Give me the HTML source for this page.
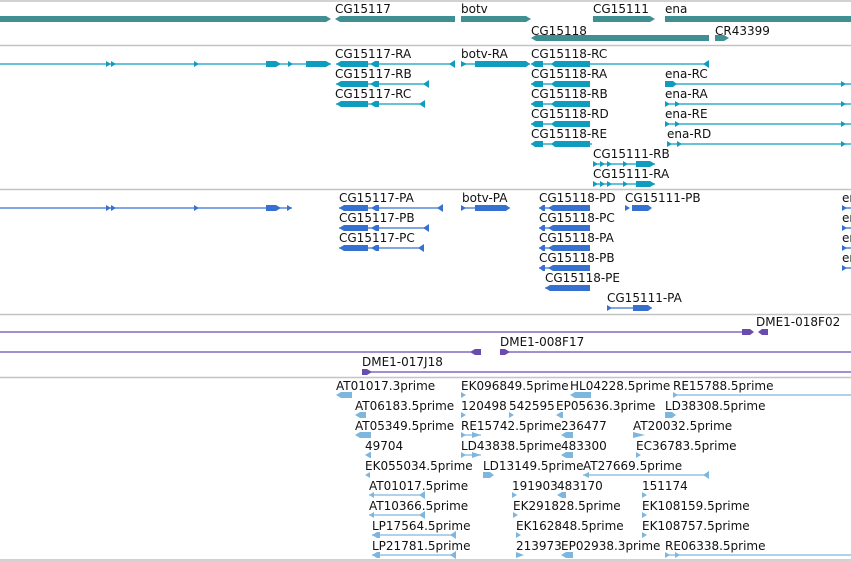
<!DOCTYPE html>
<html><head><meta charset="utf-8"><style>
html,body{margin:0;padding:0;background:#fff;width:851px;height:561px;overflow:hidden}
svg text{font-family:"DejaVu Sans","Liberation Sans",sans-serif;font-size:12px;fill:#111}
</style></head><body>
<svg width="851" height="561" xmlns="http://www.w3.org/2000/svg">
<g stroke="#c4c4c4" stroke-width="1.5">
<line x1="0" y1="1" x2="851" y2="1"/><line x1="0" y1="45.5" x2="851" y2="45.5"/>
<line x1="0" y1="189.5" x2="851" y2="189.5"/><line x1="0" y1="314.5" x2="851" y2="314.5"/>
<line x1="0" y1="377.5" x2="851" y2="377.5"/><line x1="0" y1="560" x2="851" y2="560"/>
</g>
<!-- genes -->
<g fill="#3f8f93">
<polygon points="0,16 326,16 331,19 326,22 0,22"/>
<polygon points="340,16 455,16 455,22 340,22 335,19"/>
<polygon points="461,16 526,16 531,19 526,22 461,22"/>
<polygon points="593,16 650,16 655,19 650,22 593,22"/>
<rect x="665" y="16" width="186" height="6"/>
<polygon points="536,35 709,35 709,41 536,41 531,38"/>
<polygon points="715,35 724,35 729,38 724,41 715,41"/>
</g>
<text x="335" y="13">CG15117</text><text x="461" y="13">botv</text><text x="593" y="13">CG15111</text><text x="665" y="13">ena</text>
<text x="531" y="35">CG15118</text><text x="715" y="35">CR43399</text>
<!-- transcripts -->
<g fill="#0e9dbf" stroke="#0e9dbf">
<g stroke-width="1.3">
<line x1="0" y1="64" x2="331" y2="64"/><line x1="336" y1="64" x2="455" y2="64"/><line x1="461" y1="64" x2="530" y2="64"/><line x1="531" y1="64" x2="709" y2="64"/>
<line x1="336" y1="84" x2="429" y2="84"/><line x1="531" y1="84" x2="590" y2="84"/><line x1="665" y1="84" x2="851" y2="84"/>
<line x1="336" y1="104" x2="425" y2="104"/><line x1="531" y1="104" x2="590" y2="104"/><line x1="665" y1="104" x2="851" y2="104"/>
<line x1="531" y1="124" x2="590" y2="124"/><line x1="665" y1="124" x2="851" y2="124"/>
<line x1="531" y1="144" x2="592" y2="144"/><line x1="667" y1="144" x2="851" y2="144"/>
<line x1="593" y1="164" x2="655" y2="164"/><line x1="593" y1="184" x2="655" y2="184"/>
</g>
<g stroke="none">
<polygon points="106,61 111,64 106,67"/><polygon points="111,61 116,64 111,67"/><polygon points="194,61 199,64 194,67"/>
<polygon points="266,61 276,61 281,64 276,67 266,67"/><polygon points="288,61 293,64 288,67"/><polygon points="306,61 326,61 331,64 326,67 306,67"/>
<polygon points="461,61 467,64 461,67"/><polygon points="475,61 526,61 530,64 526,67 475,67"/>
<polygon points="703,64 709,60 709,68"/>
<polygon points="665,81 673,81 677,84 673,87 665,87"/><polygon points="841,81 846,84 841,87"/>
<polygon points="665,101 670,104 665,107"/><polygon points="675,101 680,104 675,107"/><polygon points="841,101 846,104 841,107"/>
<polygon points="665,121 670,124 665,127"/><polygon points="675,121 680,124 675,127"/><polygon points="841,121 846,124 841,127"/>
<polygon points="667,141 672,144 667,147"/><polygon points="677,141 682,144 677,147"/><polygon points="841,141 846,144 841,147"/>
</g>
<g stroke="none" id="t17">
<polygon points="336,64 341,61 368,61 368,67 341,67"/><polygon points="370,64 375,61 379,61 379,67 375,67"/>
</g>
<use href="#t17" y="20"/><use href="#t17" y="40"/>
<g stroke="none">
<polygon points="449,64 455,60 455,68"/><polygon points="423,84 429,80 429,88"/><polygon points="419,104 425,100 425,108"/>
</g>
<g stroke="none" id="t18"><polygon points="531,64 535,61 543,61 543,67 535,67"/><polygon points="551,64 555,61 590,61 590,67 555,67"/></g>
<use href="#t18" y="20"/><use href="#t18" y="40"/><use href="#t18" y="60"/><use href="#t18" y="80"/>
<g stroke="none" id="t11"><polygon points="593,161 598,164 593,167"/><polygon points="600,161 605,164 600,167"/><polygon points="607,161 612,164 607,167"/><polygon points="623,161 628,164 623,167"/><polygon points="636,161 650,161 655,164 650,167 636,167"/></g>
<use href="#t11" y="20"/>
</g>
<text x="335" y="58">CG15117-RA</text><text x="461" y="58">botv-RA</text><text x="531" y="58">CG15118-RC</text>
<text x="335" y="78">CG15117-RB</text><text x="531" y="78">CG15118-RA</text><text x="665" y="78">ena-RC</text>
<text x="335" y="98">CG15117-RC</text><text x="531" y="98">CG15118-RB</text><text x="665" y="98">ena-RA</text>
<text x="531" y="118">CG15118-RD</text><text x="665" y="118">ena-RE</text>
<text x="531" y="138">CG15118-RE</text><text x="667" y="138">ena-RD</text>
<text x="593" y="158">CG15111-RB</text><text x="593" y="178">CG15111-RA</text>
<!-- proteins -->
<g fill="#3670d0" stroke="#3670d0">
<g stroke-width="1.3">
<line x1="0" y1="208" x2="292" y2="208"/><line x1="339" y1="208" x2="443" y2="208"/><line x1="461" y1="208" x2="510" y2="208"/><line x1="539" y1="208" x2="590" y2="208"/><line x1="842" y1="208" x2="851" y2="208"/>
<line x1="339" y1="228" x2="429" y2="228"/><line x1="539" y1="228" x2="590" y2="228"/><line x1="842" y1="228" x2="851" y2="228"/>
<line x1="339" y1="248" x2="424" y2="248"/><line x1="539" y1="248" x2="590" y2="248"/><line x1="842" y1="248" x2="851" y2="248"/>
<line x1="539" y1="268" x2="590" y2="268"/><line x1="842" y1="268" x2="851" y2="268"/>
<line x1="545" y1="288" x2="590" y2="288"/><line x1="607" y1="308" x2="652" y2="308"/>
</g>
<g stroke="none">
<polygon points="106,205 111,208 106,211"/><polygon points="111,205 116,208 111,211"/><polygon points="194,205 199,208 194,211"/>
<polygon points="266,205 276,205 281,208 276,211 266,211"/><polygon points="287,205 292,208 287,211"/>
<polygon points="461,205 466,208 461,211"/><polygon points="475,205 506,205 510,208 506,211 475,211"/>
<polygon points="625,205 630,208 625,211"/><polygon points="632,205 648,205 652,208 648,211 632,211"/>
<polygon points="842,205 847,208 842,211"/><polygon points="842,225 847,228 842,231"/><polygon points="842,245 847,248 842,251"/><polygon points="842,265 847,268 842,271"/>
<polygon points="437,208 443,204 443,212"/><polygon points="423,228 429,224 429,232"/><polygon points="418,248 424,244 424,252"/>
<polygon points="607,305 612,308 607,311"/><polygon points="633,305 648,305 652,308 648,311 633,311"/>
</g>
<g stroke="none" id="p17"><polygon points="339,208 344,205 368,205 368,211 344,211"/><polygon points="371,208 376,205 379,205 379,211 376,211"/></g>
<use href="#p17" y="20"/><use href="#p17" y="40"/>
<g stroke="none" id="p18"><polygon points="539,208 543,205 545,205 545,211 543,211"/><polygon points="548,208 553,205 590,205 590,211 553,211"/></g>
<use href="#p18" y="20"/><use href="#p18" y="40"/><use href="#p18" y="60"/>
<polygon stroke="none" points="545,288 550,285 590,285 590,291 550,291"/>
</g>
<text x="339" y="202">CG15117-PA</text><text x="462" y="202">botv-PA</text><text x="539" y="202">CG15118-PD</text><text x="625" y="202">CG15111-PB</text><text x="842" y="202">en</text>
<text x="339" y="222">CG15117-PB</text><text x="539" y="222">CG15118-PC</text><text x="842" y="222">en</text>
<text x="339" y="242">CG15117-PC</text><text x="539" y="242">CG15118-PA</text><text x="842" y="242">en</text>
<text x="539" y="262">CG15118-PB</text><text x="842" y="262">en</text>
<text x="545" y="282">CG15118-PE</text><text x="607" y="302">CG15111-PA</text>
<!-- clones -->
<g fill="#6a4cb0" stroke="#6a4cb0">
<line x1="0" y1="332" x2="742" y2="332" stroke-width="1.3"/>
<line x1="0" y1="352" x2="481" y2="352" stroke-width="1.3"/><line x1="500" y1="352" x2="851" y2="352" stroke-width="1.3"/>
<line x1="362" y1="372" x2="851" y2="372" stroke-width="1.3"/>
<g stroke="none">
<polygon points="742,329 750,329 754,332 750,335 742,335"/><polygon points="758,332 762,329 768,329 768,335 762,335"/>
<polygon points="470,352 475,349 481,349 481,355 475,355"/>
<polygon points="500,349 505,349 510,352 505,355 500,355"/>
<polygon points="362,369 367,369 372,372 367,375 362,375"/>
</g></g>
<text x="756" y="326">DME1-018F02</text><text x="500" y="346">DME1-008F17</text><text x="362" y="366">DME1-017J18</text>
<!-- ESTs -->
<g fill="#7fb6de" stroke="#7fb6de">
<g stroke-width="1.3">
<line x1="673" y1="395" x2="851" y2="395"/>
<line x1="461" y1="435" x2="481" y2="435"/><line x1="461" y1="455" x2="481" y2="455"/>
<line x1="583" y1="475" x2="709" y2="475"/>
<line x1="369" y1="495" x2="425" y2="495"/><line x1="369" y1="515" x2="425" y2="515"/>
<line x1="372" y1="535" x2="456" y2="535"/><line x1="372" y1="555" x2="456" y2="555"/>
<line x1="665" y1="555" x2="851" y2="555"/>
</g>
<g stroke="none">
<polygon points="336,395 341,392 352,392 352,398 341,398"/><polygon points="461,392 466,395 461,398"/><polygon points="570,395 575,392 591,392 591,398 575,398"/><polygon points="673,392 678,395 673,398"/>
<polygon points="355,415 360,412 366,412 366,418 360,418"/><polygon points="461,412 466,415 461,418"/><polygon points="509,412 514,415 509,418"/><polygon points="556,415 561,412 563,412 563,418 561,418"/><polygon points="665,412 672,412 676,415 672,418 665,418"/>
<polygon points="355,435 360,432 371,432 371,438 360,438"/><polygon points="461,432 466,435 461,438"/><polygon points="472,432 481,435 472,438"/><polygon points="561,435 566,432 573,432 573,438 566,438"/><polygon points="633,432 645,435 633,438"/>
<polygon points="365,455 370,452 371,452 371,458 370,458"/><polygon points="461,452 466,455 461,458"/><polygon points="472,452 481,455 472,458"/><polygon points="561,455 566,452 573,452 573,458 566,458"/><polygon points="636,452 641,455 636,458"/>
<polygon points="365,475 370,472 370,478"/><polygon points="483,472 490,472 494,475 490,478 483,478"/><polygon points="583,475 589,472 589,478"/><polygon points="703,475 709,471 709,479"/>
<polygon points="369,495 374,492 374,498"/><polygon points="419,495 425,491 425,499"/><polygon points="512,492 517,495 512,498"/><polygon points="557,495 562,492 566,492 566,498 562,498"/><polygon points="642,492 647,495 642,498"/>
<polygon points="369,515 374,512 374,518"/><polygon points="419,515 425,511 425,519"/><polygon points="513,512 518,515 513,518"/><polygon points="642,512 647,515 642,518"/>
<polygon points="372,535 377,532 380,532 380,538 377,538"/><polygon points="450,535 456,531 456,539"/><polygon points="516,532 521,535 516,538"/><polygon points="642,532 647,535 642,538"/>
<polygon points="372,555 377,552 380,552 380,558 377,558"/><polygon points="450,555 456,551 456,559"/><polygon points="516,552 524,555 516,558"/><polygon points="561,555 566,552 573,552 573,558 566,558"/><polygon points="665,552 670,555 665,558"/><polygon points="675,552 680,555 675,558"/>
</g>
</g>
<text x="336" y="390">AT01017.3prime</text><text x="461" y="390">EK096849.5prime</text><text x="570" y="390">HL04228.5prime</text><text x="673" y="390">RE15788.5prime</text>
<text x="355" y="410">AT06183.5prime</text><text x="461" y="410">120498</text><text x="509" y="410">542595</text><text x="556" y="410">EP05636.3prime</text><text x="665" y="410">LD38308.5prime</text>
<text x="355" y="430">AT05349.5prime</text><text x="461" y="430">RE15742.5prime</text><text x="561" y="430">236477</text><text x="633" y="430">AT20032.5prime</text>
<text x="365" y="450">49704</text><text x="461" y="450">LD43838.5prime</text><text x="561" y="450">483300</text><text x="636" y="450">EC36783.5prime</text>
<text x="365" y="470">EK055034.5prime</text><text x="483" y="470">LD13149.5prime</text><text x="583" y="470">AT27669.5prime</text>
<text x="369" y="490">AT01017.5prime</text><text x="512" y="490">191903</text><text x="557" y="490">483170</text><text x="642" y="490">151174</text>
<text x="369" y="510">AT10366.5prime</text><text x="513" y="510">EK291828.5prime</text><text x="642" y="510">EK108159.5prime</text>
<text x="372" y="530">LP17564.5prime</text><text x="516" y="530">EK162848.5prime</text><text x="642" y="530">EK108757.5prime</text>
<text x="372" y="550">LP21781.5prime</text><text x="516" y="550">213973</text><text x="561" y="550">EP02938.3prime</text><text x="665" y="550">RE06338.5prime</text>
</svg>
</body></html>
